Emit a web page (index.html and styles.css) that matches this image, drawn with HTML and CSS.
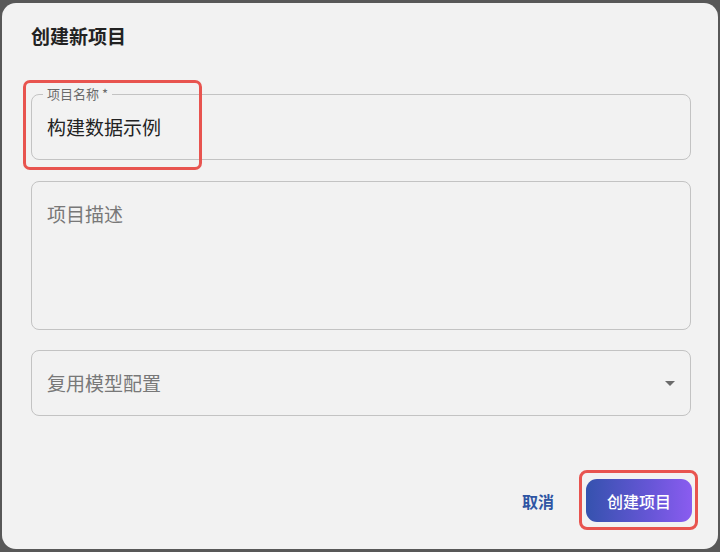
FILE: index.html
```html
<!DOCTYPE html>
<html lang="zh-CN">
<head>
<meta charset="utf-8">
<title>创建新项目</title>
<link rel="stylesheet" href="styles.css">
</head>
<body>
<div class="dialog">
  <h2 class="title">创建新项目</h2>
  <div class="field field-name">
    <span class="legend">项目名称 *</span>
    <span class="value">构建数据示例</span>
    <span class="mark mark-name"></span>
  </div>
  <div class="field field-desc">
    <span class="placeholder">项目描述</span>
  </div>
  <div class="field field-select">
    <span class="placeholder">复用模型配置</span>
    <svg class="arrow" width="10" height="5" viewBox="0 0 10 5"><path d="M0 0h10L5 5z" fill="#6b6b6b"/></svg>
  </div>
  <div class="actions">
    <button class="btn-cancel">取消</button>
    <button class="btn-primary">创建项目<span class="mark mark-btn"></span></button>
  </div>
</div>
</body>
</html>
```
FILE: styles.css
```css
html, body {
  margin: 0;
  padding: 0;
}
body {
  width: 720px;
  height: 552px;
  background: #585858;
  font-family: "Noto Sans CJK SC", "Noto Sans", sans-serif;
  overflow: hidden;
}
.dialog {
  box-sizing: border-box;
  margin: 3px 2px 0 2px;
  height: 546px;
  background: #f2f2f2;
  border-radius: 14px;
  padding: 19px 27px 0 29px;
  display: flex;
  flex-direction: column;
}
.title {
  margin: 0;
  font-size: 19px;
  line-height: 28px;
  font-weight: 600;
  color: #222;
}
.field {
  position: relative;
  box-sizing: border-box;
  border: 1px solid #c3c3c3;
  border-radius: 8px;
  display: flex;
  align-items: center;
  padding-left: 15px;
}
.field-name {
  margin-top: 44px;
  height: 66px;
}
.legend {
  position: absolute;
  left: 11px;
  top: -10px;
  padding: 0 4px;
  background: #f2f2f2;
  font-size: 13px;
  line-height: 18px;
  color: #6a6a6a;
}
.value {
  font-size: 19px;
  line-height: 28px;
  color: #222;
}
.field-desc {
  margin-top: 21px;
  height: 149px;
  align-items: flex-start;
  padding-top: 18px;
}
.placeholder {
  font-size: 19px;
  line-height: 28px;
  color: #787878;
}
.field-select {
  margin-top: 20px;
  height: 66px;
  justify-content: space-between;
  padding-right: 15px;
}
.arrow {
  display: block;
}
.actions {
  margin-top: 63px;
  display: flex;
  justify-content: flex-end;
  align-items: center;
  gap: 28px;
}
.btn-cancel {
  border: 0;
  background: none;
  padding: 6px 4px;
  font-family: inherit;
  font-size: 16px;
  font-weight: 600;
  color: #2e55a3;
}
.btn-primary {
  position: relative;
  box-sizing: border-box;
  width: 106px;
  height: 43px;
  border: 0;
  border-radius: 11px;
  background: linear-gradient(90deg, #3552ae 0%, #6656d6 60%, #8a5cf0 100%);
  color: #fff;
  font-family: inherit;
  font-size: 16px;
  font-weight: 500;
  margin-right: -1px;
}
.mark {
  position: absolute;
  box-sizing: border-box;
  border: 3.5px solid #e8544f;
  border-radius: 7px;
  pointer-events: none;
}
.mark-name {
  left: -9px;
  top: -15px;
  width: 179px;
  height: 90px;
}
.mark-btn {
  left: -7px;
  top: -9px;
  right: -6px;
  bottom: -8px;
  border-radius: 8px;
}
```
